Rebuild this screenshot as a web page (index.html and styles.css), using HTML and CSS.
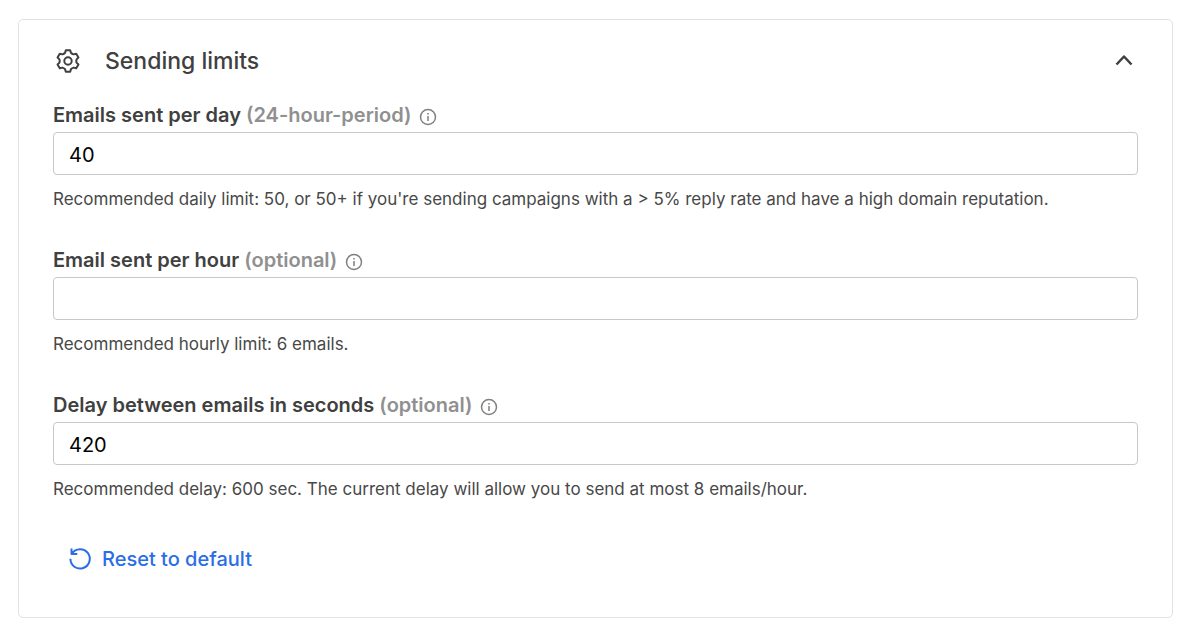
FILE: index.html
```html
<!DOCTYPE html>
<html lang="en">
<head>
  <meta charset="UTF-8" />
  <meta name="viewport" content="width=device-width, initial-scale=1.0"/>
  <title>Sending limits</title>
  <link rel="stylesheet" href="styles.css">
</head>
<body>

<section class="card">
  <header class="card-header">
    <svg class="gear" viewBox="0 0 24 24" aria-hidden="true">
      <path d="M9.8 1.200h4.400L14.900 3.800Q16 5 17.650 5.400L20.250 4.700 22.450 8.500 20.550 10.400Q20 12 20.550 13.600L22.450 15.500 20.250 19.300 17.650 18.600Q16 19 14.900 20.200L14.200 22.800H9.800L9.100 20.200Q8 19 6.350 18.600L3.750 19.300 1.550 15.500 3.450 13.600Q4 12 3.450 10.400L1.550 8.500 3.750 4.700 6.350 5.400Q8 5 9.100 3.800Z"/>
      <circle cx="12" cy="12" r="3.700"/>
    </svg>
    <h2>Sending limits</h2>
    <button type="button" class="toggle" aria-label="Collapse" aria-expanded="true">
      <svg viewBox="0 0 20 20"><path d="M2.500 13.500 10 5.500l7.500 8"/></svg>
    </button>
  </header>

  <form class="limits">
    <div class="form-group">
      <div class="label-row">
        <label for="per-day">Emails sent per day <span>(24-hour-period)</span></label>
        <svg class="info" viewBox="0 0 18 18" aria-hidden="true"><circle cx="9" cy="9" r="7.500"/><path d="M9 8v5M9 5v1.500"/></svg>
      </div>
      <input type="text" id="per-day" value="40" />
      <p class="hint">Recommended daily limit: 50, or 50+ if you're sending campaigns with a &gt; 5% reply rate and have a high domain reputation.</p>
    </div>
    <div class="form-group">
      <div class="label-row">
        <label for="per-hour">Email sent per hour <span>(optional)</span></label>
        <svg class="info" viewBox="0 0 18 18" aria-hidden="true"><circle cx="9" cy="9" r="7.500"/><path d="M9 8v5M9 5v1.500"/></svg>
      </div>
      <input type="text" id="per-hour" />
      <p class="hint">Recommended hourly limit: 6 emails.</p>
    </div>
    <div class="form-group">
      <div class="label-row">
        <label for="delay">Delay between emails in seconds <span>(optional)</span></label>
        <svg class="info" viewBox="0 0 18 18" aria-hidden="true"><circle cx="9" cy="9" r="7.500"/><path d="M9 8v5M9 5v1.500"/></svg>
      </div>
      <input type="text" id="delay" value="420" />
      <p class="hint">Recommended delay: 600 sec. The current delay will allow you to send at most 8 emails/hour.</p>
    </div>
    <button type="reset" class="reset">
      <svg viewBox="0 0 24 24" aria-hidden="true"><path d="M3.500 1.500v5.500h5.800M4 6.500a9.700 9.700 0 1 1-1.600 5.300"/></svg>
      Reset to default
    </button>
  </form>
</section>

</body>
</html>
```

FILE: styles.css
```css
* {
  box-sizing: border-box;
}

body {
  font-family: Inter, "Liberation Sans", sans-serif;
  margin: 0;
  padding: 19px 27px 19px 18px;
  background: #fff;
  color: #404040;
}

svg {
  fill: none;
  stroke: currentColor;
  stroke-width: 2;
  stroke-linejoin: round;
}

.card {
  border: 1px solid #e2e2e2;
  border-radius: 5px;
  padding: 24px 34px 36px;
}

.card-header {
  display: flex;
  align-items: center;
  height: 34px;
  padding: 0 4px 0 3px;
}

.card-header h2 {
  flex: 1;
  margin: 0 0 0 25px;
  font-size: 23px;
  font-weight: 500;
}

.gear {
  width: 24px;
  height: 24px;
}

.toggle {
  display: flex;
  padding: 0;
  border: none;
  background: none;
  color: inherit;
  cursor: pointer;
}

.toggle svg {
  width: 20px;
  height: 20px;
  stroke-width: 2.5;
}

.limits {
  padding-top: 24px;
}

.form-group {
  margin-bottom: 36px;
}

.label-row {
  display: flex;
  align-items: flex-start;
  gap: 8px;
  height: 30px;
}

.label-row label {
  font-size: 20px;
  font-weight: 600;
  line-height: 26px;
}

.label-row span {
  color: #909090;
}

.info {
  align-self: center;
  width: 18px;
  height: 18px;
  color: #808080;
  stroke-width: 1.5;
}

.form-group input {
  display: block;
  width: 100%;
  height: 43px;
  padding: 2px 15px 0;
  border: 1px solid #c8c8c8;
  border-radius: 4px;
  background: #fff;
  color: #000;
  font: inherit;
  font-size: 20px;
}

.hint {
  margin: 12px 0 0;
  color: #484848;
  font-size: 17px;
  line-height: 24px;
}

.reset {
  display: flex;
  align-items: center;
  gap: 10px;
  height: 44px;
  padding: 0 15px;
  border: none;
  background: none;
  color: #2a6ee6;
  font: inherit;
  font-size: 20px;
  font-weight: 500;
  cursor: pointer;
}

.reset svg {
  width: 24px;
  height: 24px;
}
```
